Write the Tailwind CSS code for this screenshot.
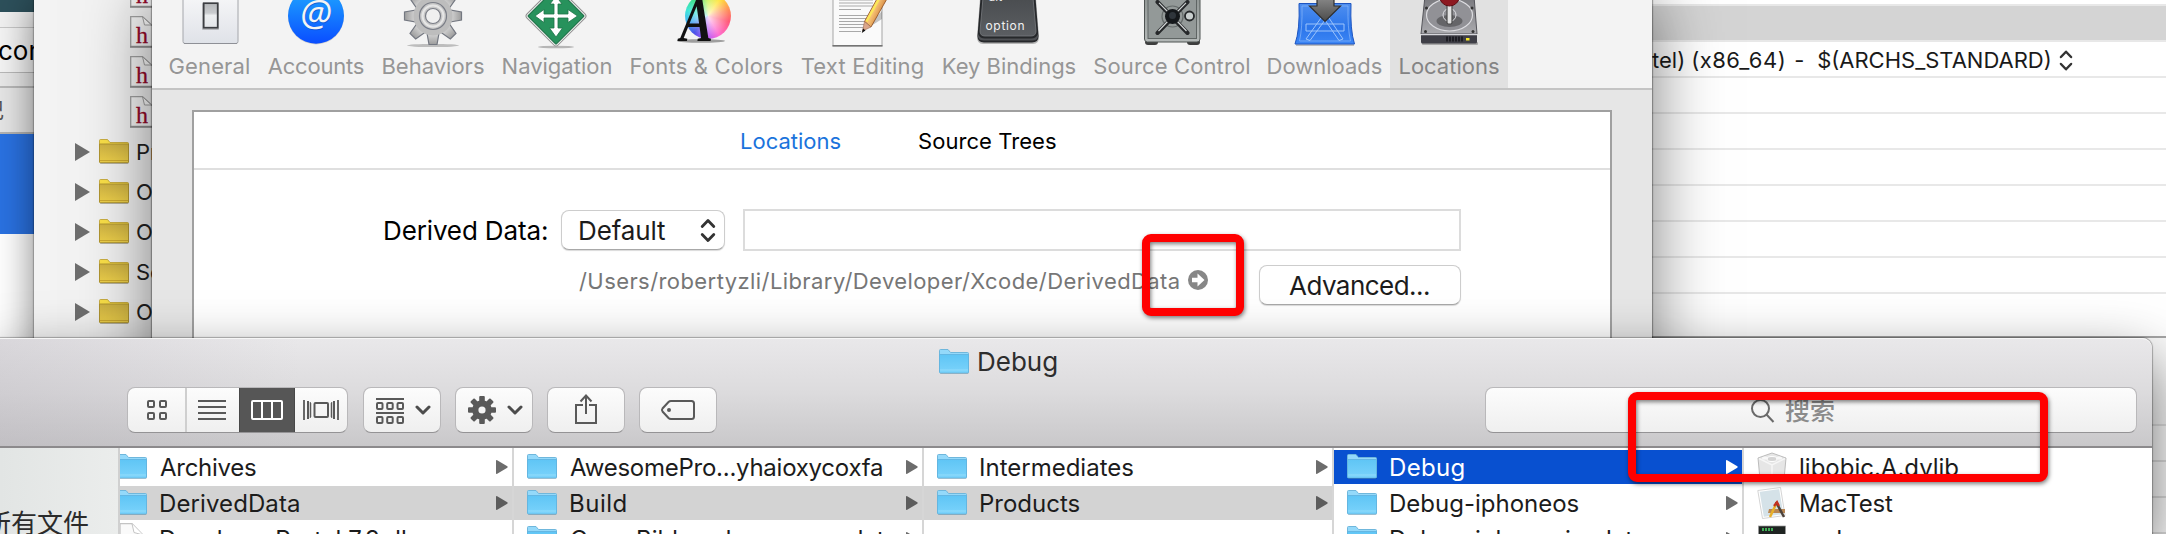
<!DOCTYPE html>
<html lang="zh" class="overflow-hidden">
<head>
<meta charset="utf-8">
<title>Debug</title>
<script src="https://cdn.jsdelivr.net/npm/@tailwindcss/browser@4"></script>
</head>
<body class="relative h-[534px] w-[2166px] overflow-hidden bg-white font-[Inter,'Noto_Sans_CJK_SC',sans-serif] text-black">

<svg class="absolute size-0" aria-hidden="true">
  <defs>
    <linearGradient id="gBlue" x1="0" y1="0" x2="0" y2="1"><stop offset="0" stop-color="#5fc5f5"/><stop offset="1" stop-color="#7bd3fb"/></linearGradient>
    <linearGradient id="gYel" x1="0" y1="0" x2="0" y2="1"><stop offset="0" stop-color="#cfb345"/><stop offset="1" stop-color="#f0d24a"/></linearGradient>
    <symbol id="folder" viewBox="0 0 30 26">
      <rect x="1" y="5" width="28.500" height="20" rx="1" fill="#000" opacity=".22"/>
      <path d="M.5 23V1.500Q.5.500 1.500.5H9l2.500 3H28.500Q29.500 3.500 29.500 4.500V23Z" fill="#94d9fa" stroke="#6fb7dc"/>
      <path d="M.5 5.500H29.500V23Q29.500 24 28.500 24H1.500Q.5 24 .5 23Z" fill="url(#gBlue)" stroke="#62b4e0" stroke-width=".9"/>
      <path d="M1 21H29" stroke="#9adffb" stroke-width=".8"/>
    </symbol>
    <symbol id="yfolder" viewBox="0 0 30 26">
      <rect x="1" y="5" width="28.500" height="20" rx="1" fill="#000" opacity=".25"/>
      <path d="M.5 23V1.500Q.5.500 1.500.5H8.500L11 3.500H28.500Q29.500 3.500 29.500 4.500V23Z" fill="#fbe148" stroke="#bfa02c" stroke-width=".8"/>
      <path d="M.5 5H29.500V23Q29.500 23.700 28.500 23.700H1.500Q.5 23.700 .5 23Z" fill="url(#gYel)" stroke="#ad922e" stroke-width=".9"/>
      <path d="M1 21.500H29" stroke="#c9a52f" stroke-width=".9"/>
    </symbol>
    <symbol id="tri" viewBox="0 0 12 14"><path d="M0 1Q0-.3 1.200.3L11.300 6.300Q12 7 11.300 7.700L1.200 13.700Q0 14.300 0 13Z" fill="currentColor"/></symbol>
    <symbol id="hfile" viewBox="0 0 30 32">
      <path d="M.7 30.500V.7H12.500L21.500 9H30V30.500Z" fill="#f7f7f7" stroke="#a3a3a3" stroke-width="1.300"/>
      <path d="M12.500.7L14.500 9H21.500Z" fill="#fff" stroke="#a3a3a3"/>
      <path d="M0 31H30" stroke="#8a8a8a" stroke-width="1.400"/>
      <text x="6" y="26.500" font-family="Liberation Serif" font-size="24" fill="#97092a" stroke="#97092a" stroke-width=".3">h</text>
    </symbol>
    <symbol id="updown" viewBox="0 0 16 24"><path d="M2.200 8L8 2l5.800 6M2.200 16L8 22l5.800-6" fill="none" stroke="currentColor" stroke-width="2.800" stroke-linecap="round" stroke-linejoin="round"/></symbol>
    <symbol id="chev" viewBox="0 0 16 10"><path d="M2 2l6 6 6-6" fill="none" stroke="#4c4c4c" stroke-width="3" stroke-linecap="round" stroke-linejoin="round"/></symbol>
  </defs>
</svg>

<!-- Rear window on the left -->
<section class="absolute left-0 top-0 flex h-[534px] w-[34px] flex-col overflow-hidden bg-white">
  <div class="h-[12px] bg-[#2d505b]"></div>
  <div class="h-[16px] border-b border-[#c8c8c8] bg-[#f2f2f2]"></div>
  <div class="flex h-[45px] items-center border-b border-[#b9b9b9] bg-[#f4f4f4] pt-px text-[26px] leading-none"><span class="-ml-[2px]">con</span></div>
  <div class="h-[15px] border-b-2 border-[#b9b9b9] bg-[#e9e9e9]"></div>
  <div class="flex h-[46px] items-center border-b-2 border-[#b3b3b3] bg-[#e6e6e6] text-[22px] leading-none text-[#555]"><span class="-ml-[18px]">记</span></div>
  <div class="h-[100px] bg-[#2a72e2]"></div>
</section>

<!-- Xcode project window -->
<section class="absolute left-[34px] top-0 flex h-[534px] w-[2132px] bg-white shadow-[0_0_36px_rgba(0,0,0,.5),0_0_1px_1px_rgba(0,0,0,.22)]">
  <nav class="flex w-[158px] flex-col bg-[#f3f3f3] text-[22px] leading-none text-[#222]">
    <div class="-mt-[28px] flex h-[40px] items-center pl-[96px]"><svg class="h-[32px] w-[30px]"><use href="#hfile"/></svg></div>
    <div class="flex h-[40px] items-center pl-[96px]"><svg class="h-[32px] w-[30px]"><use href="#hfile"/></svg></div>
    <div class="flex h-[40px] items-center pl-[96px]"><svg class="h-[32px] w-[30px]"><use href="#hfile"/></svg></div>
    <div class="flex h-[40px] items-center pl-[96px]"><svg class="h-[32px] w-[30px]"><use href="#hfile"/></svg></div>
    <div class="flex h-[40px] items-center whitespace-nowrap pl-[41px]"><svg class="mr-[9px] h-[18px] w-[15px] text-[#6e6e6e]" viewBox="0 0 15 18"><path d="M0 0L15 9L0 18Z" fill="currentColor"/></svg><svg class="mr-[7px] h-[26px] w-[30px]"><use href="#yfolder"/></svg>Pr</div>
    <div class="flex h-[40px] items-center whitespace-nowrap pl-[41px]"><svg class="mr-[9px] h-[18px] w-[15px] text-[#6e6e6e]" viewBox="0 0 15 18"><path d="M0 0L15 9L0 18Z" fill="currentColor"/></svg><svg class="mr-[7px] h-[26px] w-[30px]"><use href="#yfolder"/></svg>O</div>
    <div class="flex h-[40px] items-center whitespace-nowrap pl-[41px]"><svg class="mr-[9px] h-[18px] w-[15px] text-[#6e6e6e]" viewBox="0 0 15 18"><path d="M0 0L15 9L0 18Z" fill="currentColor"/></svg><svg class="mr-[7px] h-[26px] w-[30px]"><use href="#yfolder"/></svg>O</div>
    <div class="flex h-[40px] items-center whitespace-nowrap pl-[41px]"><svg class="mr-[9px] h-[18px] w-[15px] text-[#6e6e6e]" viewBox="0 0 15 18"><path d="M0 0L15 9L0 18Z" fill="currentColor"/></svg><svg class="mr-[7px] h-[26px] w-[30px]"><use href="#yfolder"/></svg>Se</div>
    <div class="flex h-[40px] items-center whitespace-nowrap pl-[41px]"><svg class="mr-[9px] h-[18px] w-[15px] text-[#6e6e6e]" viewBox="0 0 15 18"><path d="M0 0L15 9L0 18Z" fill="currentColor"/></svg><svg class="mr-[7px] h-[26px] w-[30px]"><use href="#yfolder"/></svg>O</div>
  </nav>
  <div class="ml-auto flex w-[514px] flex-col">
    <div class="h-[6px] border-b-2 border-[#e8e8e8]"></div>
    <div class="h-[36px] border-b-2 border-[#e8e8e8] bg-[#d4d4d4]"></div>
    <div class="flex h-[36px] items-center border-b-2 border-[#e8e8e8] pt-[2px] text-[22px] leading-none text-[#1a1a1a]">
      <span>tel)</span><span class="ml-[6px] tracking-[.47px]">(x86_64)</span><span class="ml-[8px] w-[23px]">-</span><span>$(ARCHS_STANDARD)</span>
      <svg class="ml-[7px] h-[21px] w-[14px] text-[#333]"><use href="#updown"/></svg>
    </div>
    <div class="h-[36px] border-b-2 border-[#e8e8e8]"></div>
    <div class="h-[36px] border-b-2 border-[#e8e8e8]"></div>
    <div class="h-[36px] border-b-2 border-[#e8e8e8]"></div>
    <div class="h-[36px] border-b-2 border-[#e8e8e8]"></div>
    <div class="h-[36px] border-b-2 border-[#e8e8e8]"></div>
    <div class="h-[36px] border-b-2 border-[#e8e8e8]"></div>
    <div class="h-[44px] border-b-2 border-[#a6a6a6]"></div>
    <div class="h-[88px] border-b-2 border-[#e4e4e4] bg-[#fbfbfb]"></div>
    <div class="h-[36px] border-b-2 border-[#e0e0e0]"></div>
    <div class="h-[36px] border-b-2 border-[#e0e0e0]"></div>
    <div class="h-[36px] border-b-2 border-[#e0e0e0]"></div>
  </div>
</section>

<!-- Xcode preferences window -->
<section class="absolute left-[152px] top-0 flex h-[534px] w-[1500px] flex-col bg-[#e6e6e6] shadow-[0_0_64px_rgba(0,0,0,.52),0_0_1px_1px_rgba(0,0,0,.3)]">
  <div class="flex h-[90px] border-b-2 border-[#c4c4c4] bg-[#f3f3f3] pl-[8px] text-[22px] leading-none text-[#969696]">
    <div class="flex w-[99px] flex-col items-center whitespace-nowrap">
      <svg class="h-[50px] w-[64px]" viewBox="0 0 64 50">
        <defs><linearGradient id="g1" x1="0" y1="0" x2="0" y2="1"><stop offset="0" stop-color="#f8f8f9"/><stop offset="1" stop-color="#dfe2e8"/></linearGradient><linearGradient id="g1b" x1="0" y1="0" x2="0" y2="1"><stop offset="0" stop-color="#b5b7ba"/><stop offset=".4" stop-color="#c9cbce"/><stop offset=".5" stop-color="#eceef0"/><stop offset="1" stop-color="#e3e5e8"/></linearGradient></defs>
        <rect x="5" y="-8" width="55" height="51.500" rx="2" fill="url(#g1)" stroke="#a4a6ab"/>
        <path d="M6 43.500H59" stroke="#8e9096"/>
        <rect x="24" y="3" width="17" height="27" rx="1" fill="#000" opacity=".2"/>
        <rect x="25.700" y="3.200" width="14" height="24.500" fill="url(#g1b)" stroke="#3c3e42" stroke-width="1.700"/>
      </svg>
      <span class="mt-[5px] tracking-[.13px]">General</span>
    </div>
    <div class="flex w-[114px] flex-col items-center whitespace-nowrap">
      <svg class="h-[50px] w-[64px]" viewBox="0 0 64 50">
        <defs><linearGradient id="g2" x1="0" y1="0" x2="0" y2="1"><stop offset="0" stop-color="#1fa9ff"/><stop offset="1" stop-color="#0a4dff"/></linearGradient></defs>
        <circle cx="32" cy="16.500" r="28" fill="#000" opacity=".15"/>
        <circle cx="32" cy="15.700" r="28" fill="url(#g2)"/>
        <text x="32.500" y="26.500" text-anchor="middle" font-family="Open Sans" font-style="italic" font-size="37" fill="#0a3fae" opacity=".5">@</text>
        <text x="32" y="25.500" text-anchor="middle" font-family="Open Sans" font-style="italic" font-size="37" fill="#f4f4f4">@</text>
      </svg>
      <span class="mt-[5px] tracking-[-.2px]">Accounts</span>
    </div>
    <div class="flex w-[120px] flex-col items-center whitespace-nowrap">
      <svg class="h-[50px] w-[64px]" viewBox="0 0 64 50">
        <defs><linearGradient id="g3" x1="0" y1="0" x2="0" y2="1"><stop offset="0" stop-color="#d8d8d8"/><stop offset="1" stop-color="#9d9d9d"/></linearGradient></defs>
        <ellipse cx="32" cy="45.500" rx="26" ry="1.600" fill="#000" opacity=".22"/>
        <g fill="url(#g3)" stroke="#737780" stroke-width="1.200" transform="translate(0,1)">
          <path d="M26 32L28 43.500H36L38 32Z"/>
          <path d="M26 32L28 43.500H36L38 32Z" transform="rotate(45 32 15)"/>
          <path d="M26 32L28 43.500H36L38 32Z" transform="rotate(90 32 15)"/>
          <path d="M26 32L28 43.500H36L38 32Z" transform="rotate(135 32 15)"/>
          <path d="M26 32L28 43.500H36L38 32Z" transform="rotate(-45 32 15)"/>
          <path d="M26 32L28 43.500H36L38 32Z" transform="rotate(-90 32 15)"/>
          <path d="M26 32L28 43.500H36L38 32Z" transform="rotate(-135 32 15)"/>
        </g>
        <circle cx="32" cy="16" r="19.500" fill="#bdbdbd"/>
        <circle cx="32" cy="16" r="13.500" fill="#c6c6c6" stroke="#7a7d86" stroke-width="1.200"/>
        <circle cx="32" cy="16" r="10.500" fill="none" stroke="#e6e6e6" stroke-width="2"/>
        <circle cx="32" cy="16" r="7.500" fill="#f0f0f0" stroke="#7a7d86" stroke-width="1.200"/>
      </svg>
      <span class="mt-[5px]">Behaviors</span>
    </div>
    <div class="flex w-[128px] flex-col items-center whitespace-nowrap">
      <svg class="h-[50px] w-[66px]" viewBox="0 0 66 50">
        <ellipse cx="32" cy="47" rx="18" ry="1.300" fill="#000" opacity=".25"/>
        <rect x="-22" y="-22" width="44" height="44" rx="3" transform="translate(32 16) rotate(45)" fill="#f1f1f1" stroke="#8e8e8e"/>
        <rect x="-20" y="-20" width="40" height="40" rx="1" transform="translate(32 16) rotate(45)" fill="#27925c" stroke="#1c6e45"/>
        <path d="M32-4l-6 8h4v10H20V9.500L11 16l9 6.500V18H30V28H25.500L32 37l6.500-9H34V18H44v4.500L53.500 16 44 9.500V14H34V4h4Z" fill="#fff" stroke="#1d7348" stroke-width=".8"/>
      </svg>
      <span class="mt-[5px]">Navigation</span>
    </div>
    <div class="flex w-[171px] flex-col items-center whitespace-nowrap">
      <div class="relative h-[50px] w-[64px]">
        <div class="absolute -top-[7px] left-[10px] size-[46px] rounded-full bg-[conic-gradient(#c8f04a,#ffe53a_35deg,#ff8a5c_75deg,#ff5a78_105deg,#ff6fd0_150deg,#b45cff_185deg,#4b52e8_220deg,#45b4f5_255deg,#3fe5d8_285deg,#3fe07a_325deg,#c8f04a)]"></div>
        <div class="absolute -top-[7px] left-[10px] size-[46px] rounded-full bg-[radial-gradient(#ffffffcc,#ffffff00_65%)]"></div>
        <svg class="absolute left-0 top-0 h-[50px] w-[64px]" viewBox="0 0 64 50">
          <ellipse cx="26" cy="41" rx="24" ry="1.800" fill="#000" opacity=".35"/>
          <text x="5" y="40.500" font-family="Liberation Serif" font-style="italic" font-weight="700" font-size="64" textLength="33" lengthAdjust="spacingAndGlyphs" fill="#111">A</text>
        </svg>
      </div>
      <span class="mt-[5px] tracking-[.19px]">Fonts &amp; Colors</span>
    </div>
    <div class="flex w-[141px] flex-col items-center whitespace-nowrap">
      <svg class="h-[50px] w-[64px]" viewBox="0 0 64 50">
        <defs><linearGradient id="g6" x1="0" y1="0" x2="1" y2="0.600"><stop offset="0" stop-color="#e88a2a"/><stop offset=".5" stop-color="#f7c173"/><stop offset="1" stop-color="#b4561b"/></linearGradient></defs>
        <rect x="2" y="-5" width="49" height="51" fill="#fafafa" stroke="#a5a5a5"/>
        <path d="M1.500 45.800H51.500" stroke="#747474" stroke-width="1.400"/>
        <path d="M8 0H42M8 3H42M8 6H42M8 9.500H30M8 15.500H42M8 18.500H38M8 21.500H38M8 24.500H34M8 27.500H34M8 31.500H30" stroke="#a9a9a9" stroke-width="1.200"/>
        <path d="M32 31L51 19V11Z" fill="#000" opacity=".22"/>
        <path d="M33.500 21.500L47-3H57L40 27Z" fill="url(#g6)" stroke="#8a4a1c" stroke-width=".8"/>
        <path d="M35.500 21.500L49-3" stroke="#fbe75a" stroke-width="2.400"/>
        <path d="M33.500 21.500L31.500 31 40 27Z" fill="#dba68a" stroke="#9a6a50" stroke-width=".6"/>
        <path d="M32 28.500L30.800 33 34.500 30.500Z" fill="#111"/>
      </svg>
      <span class="mt-[5px] tracking-[.17px]">Text Editing</span>
    </div>
    <div class="flex w-[152px] flex-col items-center whitespace-nowrap">
      <svg class="h-[50px] w-[64px]" viewBox="0 0 64 50">
        <defs><linearGradient id="g7" x1="0" y1="0" x2="0" y2="1"><stop offset="0" stop-color="#4a4d50"/><stop offset="1" stop-color="#5b5e62"/></linearGradient></defs>
        <path d="M3-2H59L62 37Q62 44 56 44H6Q0 44 0 37Z" fill="#000" opacity=".25"/>
        <path d="M3.500-2H58.500L61.500 36Q61.500 42.500 55 42.500H7Q.5 42.500.5 36Z" fill="#26282b"/>
        <path d="M1 34Q3 38.500 8 38.500H54Q59 38.500 61 34V37Q60 40.500 55 40.500H7Q2 40.500 1 37Z" fill="#4f5155"/>
        <path d="M6-2H56L59 31Q59 36 54 36H8Q3 36 3 31Z" fill="url(#g7)" stroke="#777a7e" stroke-width=".8"/>
        <text x="11.500" y="1" font-family="Inter" font-size="12" fill="#e8e8e8">alt</text>
        <text x="8.500" y="30" font-family="Inter" font-size="12" textLength="39" fill="#f1f1f1">option</text>
      </svg>
      <span class="mt-[5px]">Key Bindings</span>
    </div>
    <div class="flex w-[174px] flex-col items-center whitespace-nowrap">
      <svg class="h-[50px] w-[64px]" viewBox="0 0 64 50">
        <defs><linearGradient id="g8" x1="0" y1="0" x2="0" y2="1"><stop offset="0" stop-color="#8d9391"/><stop offset="1" stop-color="#b3b8b7"/></linearGradient></defs>
        <rect x="5" y="39" width="13" height="6" rx="3" fill="#3d3d3d"/><rect x="47" y="39" width="13" height="6" rx="3" fill="#3d3d3d"/>
        <rect x="4.500" y="-8" width="55.500" height="50" rx="3" fill="url(#g8)" stroke="#4f5453"/>
        <rect x="8" y="-8" width="48.500" height="46.500" fill="#939998" stroke="#5f6564"/>
        <circle cx="32.500" cy="16.500" r="10.500" fill="none" stroke="#666c6b" stroke-width="1.200"/>
        <path d="M17.500 2L47.500 33M47.500 2L17.500 33" stroke="#26282a" stroke-width="4" stroke-linecap="round"/>
        <path d="M19 2.800L29 13M46 2.800L36 13M18.500 31L28 21M37 21L46.500 31" stroke="#d0d4d4" stroke-width="1.200"/>
        <circle cx="32.500" cy="16.500" r="7.500" fill="#15181b"/><circle cx="32.500" cy="15.500" r="3.500" fill="#2f353b"/>
        <circle cx="49.500" cy="16" r="4.500" fill="#c9cfce" stroke="#26292b" stroke-width="1.800"/>
      </svg>
      <span class="mt-[5px] tracking-[.12px]">Source Control</span>
    </div>
    <div class="flex w-[131px] flex-col items-center whitespace-nowrap">
      <svg class="h-[50px] w-[64px]" viewBox="0 0 64 50">
        <defs><linearGradient id="g9" x1="0" y1="0" x2="0" y2="1"><stop offset="0" stop-color="#4f8ff0"/><stop offset=".6" stop-color="#2b75ea"/><stop offset="1" stop-color="#3c86f5"/></linearGradient><linearGradient id="g9b" x1="0" y1="0" x2="0" y2="1"><stop offset="0" stop-color="#8a8a8a"/><stop offset="1" stop-color="#4a4a4a"/></linearGradient></defs>
        <path d="M3 45H61" stroke="#000" stroke-opacity=".3" stroke-width="1.500"/>
        <path d="M6 3.500H58Q57 30 61.500 44H2Q7 30 6 3.500Z" fill="url(#g9)" stroke="#1e55c0"/>
        <path d="M9 6H55Q54.500 28 57.500 41H6.500Q9.500 28 9 6Z" fill="none" stroke="#7fb0f8" stroke-width=".8"/>
        <path d="M28 18L13 39l4 1.500L32 20 46 40.500l4-1.500L36 18M13 24H51V31H13Z" fill="none" stroke="#9cc4fb" stroke-width="1"/>
        <path d="M24-3H41V6H47.500L32 21.500 16.500 6H24Z" fill="url(#g9b)" stroke="#2f2f2f" stroke-width="1.200"/>
      </svg>
      <span class="mt-[5px]">Downloads</span>
    </div>
    <div class="flex w-[118px] flex-col items-center whitespace-nowrap bg-[#e1e1e1] text-[#848484]">
      <svg class="h-[50px] w-[64px]" viewBox="0 0 64 50">
        <defs><linearGradient id="g10" x1="0" y1="0" x2="0" y2="1"><stop offset="0" stop-color="#77777c"/><stop offset="1" stop-color="#aaaaae"/></linearGradient></defs>
        <rect x="5" y="42" width="56" height="3" rx="1" fill="#000" opacity=".25"/>
        <path d="M8-4H57L60 34H4Z" fill="url(#g10)" stroke="#55555b"/>
        <ellipse cx="32.500" cy="15" rx="23" ry="16" fill="#919196" stroke="#dcdce0" stroke-width="1.200"/>
        <ellipse cx="32.500" cy="21" rx="13" ry="6" fill="#000" opacity=".3"/>
        <circle cx="32.500" cy="15" r="6.500" fill="none" stroke="#e0e0e4"/>
        <circle cx="8.500" cy="31.500" r="1.500" fill="#333"/><circle cx="56" cy="31.500" r="1.500" fill="#333"/><circle cx="9.500" cy="8" r="1.500" fill="#333"/><circle cx="55" cy="8" r="1.500" fill="#333"/>
        <path d="M4 35H60V42Q60 43.500 58.500 43.500H5.500Q4 43.500 4 42Z" fill="#3f3f47"/>
        <path d="M4 34.600H60" stroke="#d7d7dc" stroke-width="1.200"/>
        <path d="M30 36.500V41.500M33 36.500V41.500M36 36.500V41.500M39 36.500V41.500M42 36.500V41.500M45 36.500V41.500" stroke="#15151a" stroke-width="1.500"/>
        <rect x="49" y="38" width="3.500" height="2.500" fill="#f4e52a"/>
        <rect x="30" y="3" width="5" height="21" rx="1.500" fill="#e3e3e3" stroke="#4b4b4b" stroke-width="1.200"/>
        <circle cx="32.500" cy="-4" r="10" fill="#8d1820" stroke="#5d0d13"/>
      </svg>
      <span class="mt-[5px]">Locations</span>
    </div>
  </div>
  <div class="ml-[40px] mt-[20px] flex h-[424px] w-[1420px] flex-col border-2 border-b-0 border-[#a0a0a0] bg-white">
    <div class="flex h-[58px] items-center border-b-2 border-[#dfdfdf] pl-[546px] pt-px text-[22px] leading-none"><span class="w-[178px] text-[#1a73dc]">Locations</span><span class="tracking-[.06px]">Source Trees</span></div>
    <div class="mt-[39px] flex h-[42px] items-center pl-[189px] text-[26px] leading-none">
      <span class="w-[178px] whitespace-nowrap pt-[2px] tracking-[-.13px]">Derived Data:</span>
      <div class="flex h-[40px] w-[164px] items-center justify-between rounded-[8px] border border-[#cdcdcd] border-b-[#a8a8a8] bg-white pl-[16px] pr-[8px] text-[#1c1c1c] shadow-[0_1px_1px_rgba(0,0,0,.15)]"><span class="pt-[2px] tracking-[-.13px]">Default</span><svg class="h-[25px] w-[16px] text-[#333]"><use href="#updown"/></svg></div>
      <div class="ml-[18px] h-[42px] w-[718px] border-2 border-[#dcdcdc]"></div>
    </div>
    <div class="flex pl-[385px] pt-[14px]">
      <span class="h-[32px] w-[609px] whitespace-nowrap text-[22px] leading-[32px] tracking-[.42px] text-[#767676]">/Users/robertyzli/Library/Developer/Xcode/DerivedData</span>
      <svg class="mt-[5px] size-[20px]" viewBox="0 0 20 20"><circle cx="10" cy="10" r="10" fill="#878787"/><path d="M4 7.700H9.500V3.500L16.500 10 9.500 16.500V12.300H4Z" fill="#fff"/></svg>
      <div class="ml-[51px] flex h-[40px] w-[202px] items-center justify-center rounded-[8px] border border-[#cdcdcd] border-b-[#a8a8a8] bg-white pr-px pt-px text-[26px] leading-none tracking-[-.53px] text-[#1c1c1c] shadow-[0_1px_1px_rgba(0,0,0,.15)]">Advanced...</div>
    </div>
  </div>
</section>

<!-- Finder window -->
<section class="absolute left-0 top-[338px] flex h-[196px] w-[2152px] flex-col rounded-tr-[10px] bg-white shadow-[0_24px_60px_rgba(0,0,0,.6),0_0_1px_1px_rgba(0,0,0,.28)]">
  <header class="flex h-[110px] shrink-0 flex-col rounded-tr-[10px] border-b-2 border-[#8c8a8c] border-t border-t-[#f6f6f6] bg-[linear-gradient(90deg,rgba(170,165,175,.25),transparent_300px),linear-gradient(#e9e8ea,#dcdbdd_50%,#c9c8ca)]">
    <div class="flex h-[45px] items-center pl-[939px] text-[26px] leading-none text-[#2d2d2d]"><svg class="mr-[8px] h-[26px] w-[30px]"><use href="#folder"/></svg><span>Debug</span></div>
    <div class="mt-[3px] flex h-[46px] pl-[127px]">
      <div class="flex h-[46px] w-[221px] overflow-hidden rounded-[8px] border border-[#b9b8ba] border-b-[#949395] bg-linear-to-b from-[#fcfcfc] to-[#efefef]">
        <div class="flex w-[59px] items-center justify-center border-r-2 border-[#cfcfcf]"><svg class="size-[20px]" viewBox="0 0 20 20" fill="none" stroke="#595959" stroke-width="2"><rect x="1" y="1" width="6" height="6" rx="1"/><rect x="13" y="1" width="6" height="6" rx="1"/><rect x="1" y="13" width="6" height="6" rx="1"/><rect x="13" y="13" width="6" height="6" rx="1"/></svg></div>
        <div class="flex w-[52px] items-center justify-center pr-[2px]"><svg class="h-[20px] w-[28px]" viewBox="0 0 28 20"><path d="M0 1H28M0 7H28M0 13H28M0 19H28" stroke="#595959" stroke-width="2"/></svg></div>
        <div class="flex w-[56px] items-center justify-center border-x border-[#484848] bg-[#565656] pr-px"><svg class="h-[20px] w-[32px]" viewBox="0 0 32 20" fill="none" stroke="#fff" stroke-width="2"><rect x="1" y="1" width="30" height="18" rx="1"/><path d="M11 1V19M21 1V19"/></svg></div>
        <div class="flex flex-1 items-center justify-center"><svg class="h-[20px] w-[36px]" viewBox="0 0 36 20" fill="none" stroke="#595959"><path d="M1 0V20M35 0V20" stroke-width="1.800"/><path d="M5 1V19M31 1V19" stroke-width="2"/><path d="M7 2L8 3V17L7 18ZM29 2L28 3V17L29 18Z" stroke-width=".5" fill="#595959"/><rect x="11.500" y="3" width="13.500" height="14" rx="1" stroke-width="2"/></svg></div>
      </div>
      <div class="ml-[15px] flex h-[46px] w-[78px] items-center rounded-[8px] border border-[#b9b8ba] border-b-[#949395] bg-linear-to-b from-[#fcfcfc] to-[#efefef] pl-[12px]">
        <svg class="mt-[2px] h-[26px] w-[28px]" viewBox="0 0 28 26" fill="none" stroke="#595959" stroke-width="2"><path d="M0 1H28M0 15H28"/><rect x="1" y="5" width="5.500" height="6" rx="1"/><rect x="11.200" y="5" width="5.500" height="6" rx="1"/><rect x="21.500" y="5" width="5.500" height="6" rx="1"/><rect x="1" y="19" width="5.500" height="6" rx="1"/><rect x="11.200" y="19" width="5.500" height="6" rx="1"/><rect x="21.500" y="19" width="5.500" height="6" rx="1"/></svg>
        <svg class="ml-[11px] h-[10px] w-[16px]"><use href="#chev"/></svg>
      </div>
      <div class="ml-[14px] flex h-[46px] w-[78px] items-center rounded-[8px] border border-[#b9b8ba] border-b-[#949395] bg-linear-to-b from-[#fcfcfc] to-[#efefef] pl-[12px]">
        <svg class="size-[28px]" viewBox="-14 -14 28 28"><g fill="#595959"><rect x="-2.800" y="-14" width="5.600" height="28" rx="1"/><rect x="-2.800" y="-14" width="5.600" height="28" rx="1" transform="rotate(45)"/><rect x="-2.800" y="-14" width="5.600" height="28" rx="1" transform="rotate(90)"/><rect x="-2.800" y="-14" width="5.600" height="28" rx="1" transform="rotate(135)"/><circle r="9.800"/></g><circle r="3.600" fill="#f4f4f4"/></svg>
        <svg class="ml-[11px] h-[10px] w-[16px]"><use href="#chev"/></svg>
      </div>
      <div class="ml-[14px] flex h-[46px] w-[78px] items-center justify-center rounded-[8px] border border-[#b9b8ba] border-b-[#949395] bg-linear-to-b from-[#fcfcfc] to-[#efefef]">
        <svg class="-mt-[2px] h-[30px] w-[22px]" viewBox="0 0 22 30" fill="none" stroke="#595959" stroke-width="2"><path d="M8 11H1V29H21V11H14M11 20V2M5.500 7.500L11 1.500 16.500 7.500"/></svg>
      </div>
      <div class="ml-[14px] flex h-[46px] w-[78px] items-center justify-center rounded-[8px] border border-[#b9b8ba] border-b-[#949395] bg-linear-to-b from-[#fcfcfc] to-[#efefef]">
        <svg class="h-[22px] w-[36px]" viewBox="0 0 36 22" fill="none" stroke="#595959" stroke-width="2"><path d="M11 2H31.500Q34 2 34 4.500V17.500Q34 20 31.500 20H11Q9.500 20 8.500 19L2.500 12.500Q1.300 11 2.500 9.500L8.500 3Q9.500 2 11 2Z"/><circle cx="9" cy="11" r="2" fill="#595959" stroke="none"/></svg>
      </div>
      <div class="ml-auto mr-[15px] flex h-[46px] w-[652px] items-center rounded-[8px] border border-[#b9b8ba] border-b-[#949395] bg-linear-to-b from-[#fcfcfc] to-[#efefef] pl-[265px] text-[25px] leading-none text-[#8b8b8b]">
        <svg class="mr-[10px] mt-[2px] h-[24px] w-[24px]" viewBox="0 0 24 24" fill="none" stroke="#6a6a6a" stroke-width="2"><circle cx="9.500" cy="9.500" r="8.500"/><path d="M15.500 15.500L22.500 23"/></svg><span class="pt-[2px] font-medium">搜索</span>
      </div>
    </div>
  </header>

  <div class="flex h-[86px] overflow-hidden text-[24px] leading-none text-[#1c1c1c]">
    <div class="w-[120px] overflow-hidden whitespace-nowrap border-r-2 border-[#d0d0d0] bg-linear-to-r from-[#e2e5e4] to-[#ebedec] text-[#2b2b2b]"><div class="-ml-[15px] mt-[63px] text-[26px]">所有文件</div></div>

    <div class="flex w-[394px] flex-col gap-[2px] border-r-2 border-[#d6d6d6] pt-[2px]">
      <div class="flex h-[34px] shrink-0 items-center overflow-hidden pr-[4px]"><svg class="-ml-[3px] mr-[13px] h-[26px] w-[30px] shrink-0"><use href="#folder"/></svg><span class="pt-px tracking-[-.27px]">Archives</span><svg class="ml-auto h-[14px] w-[12px] text-[#6c6c6c]"><use href="#tri"/></svg></div>
      <div class="flex h-[34px] shrink-0 items-center overflow-hidden bg-[#d3d3d3] pr-[4px]"><svg class="-ml-[3px] mr-[12px] h-[26px] w-[30px] shrink-0"><use href="#folder"/></svg><span class="pt-px tracking-[.1px]">DerivedData</span><svg class="ml-auto h-[14px] w-[12px] text-[#5c5c5c]"><use href="#tri"/></svg></div>
      <div class="flex h-[34px] shrink-0 items-center whitespace-nowrap"><svg class="mr-[14px] h-[32px] w-[24px] shrink-0" viewBox="0 0 24 32"><path d="M0 31V.7H12L23 12V31" fill="#fafafa" stroke="#c4c4c4" stroke-width="1.300"/><path d="M12 .7L14 9.500 23 12" fill="#fff" stroke="#c4c4c4"/></svg><span class="pl-px pt-px">DeveloperPortal 7.3.db</span></div>
    </div>

    <div class="flex w-[410px] flex-col gap-[2px] border-r-2 border-[#d6d6d6] pt-[2px]">
      <div class="flex h-[34px] shrink-0 items-center whitespace-nowrap pl-[13px] pr-[4px]"><svg class="mr-[13px] h-[26px] w-[30px] shrink-0"><use href="#folder"/></svg><span class="pt-px tracking-[-.25px]">AwesomePro...yhaioxycoxfa</span><svg class="ml-auto h-[14px] w-[12px] text-[#6c6c6c]"><use href="#tri"/></svg></div>
      <div class="flex h-[34px] shrink-0 items-center bg-[#d3d3d3] pl-[13px] pr-[4px]"><svg class="mr-[12px] h-[26px] w-[30px] shrink-0"><use href="#folder"/></svg><span class="pt-px tracking-[.5px]">Build</span><svg class="ml-auto h-[14px] w-[12px] text-[#5c5c5c]"><use href="#tri"/></svg></div>
      <div class="flex h-[34px] shrink-0 items-center whitespace-nowrap pl-[13px] pr-[4px]"><svg class="mr-[12px] h-[26px] w-[30px] shrink-0"><use href="#folder"/></svg><span class="pl-px pt-px">CameBildw...dxncmngcsdat</span><svg class="ml-auto h-[14px] w-[12px] shrink-0 text-[#6c6c6c]"><use href="#tri"/></svg></div>
    </div>

    <div class="flex w-[410px] flex-col gap-[2px] border-r-2 border-[#d6d6d6] pt-[2px]">
      <div class="flex h-[34px] shrink-0 items-center pl-[13px] pr-[4px]"><svg class="mr-[12px] h-[26px] w-[30px] shrink-0"><use href="#folder"/></svg><span class="pt-px">Intermediates</span><svg class="ml-auto h-[14px] w-[12px] text-[#6c6c6c]"><use href="#tri"/></svg></div>
      <div class="flex h-[34px] shrink-0 items-center bg-[#d3d3d3] pl-[13px] pr-[4px]"><svg class="mr-[12px] h-[26px] w-[30px] shrink-0"><use href="#folder"/></svg><span class="pt-px">Products</span><svg class="ml-auto h-[14px] w-[12px] text-[#5c5c5c]"><use href="#tri"/></svg></div>
    </div>

    <div class="flex w-[410px] flex-col gap-[2px] border-r-2 border-[#d6d6d6] pt-[2px]">
      <div class="flex h-[34px] shrink-0 items-center bg-[#0850d0] pl-[13px] pr-[4px] text-white"><svg class="mr-[12px] h-[26px] w-[30px] shrink-0"><use href="#folder"/></svg><span class="pt-px tracking-[.33px]">Debug</span><svg class="ml-auto h-[14px] w-[12px]"><use href="#tri"/></svg></div>
      <div class="flex h-[34px] shrink-0 items-center pl-[13px] pr-[4px]"><svg class="mr-[12px] h-[26px] w-[30px] shrink-0"><use href="#folder"/></svg><span class="pt-px">Debug-iphoneos</span><svg class="ml-auto h-[14px] w-[12px] text-[#6c6c6c]"><use href="#tri"/></svg></div>
      <div class="flex h-[34px] shrink-0 items-center pl-[13px] pr-[4px]"><svg class="mr-[12px] h-[26px] w-[30px] shrink-0"><use href="#folder"/></svg><span class="pt-px">Debug-iphonesimulator</span><svg class="ml-auto h-[14px] w-[12px] text-[#6c6c6c]"><use href="#tri"/></svg></div>
    </div>

    <div class="flex flex-1 flex-col gap-[2px] pt-[2px]">
      <div class="flex h-[34px] shrink-0 items-center pl-[13px]"><svg class="mr-[12px] h-[30px] w-[30px]" viewBox="0 0 30 30"><path d="M1 6L15 1 29 6 27.500 22 15 29 2.500 22Z" fill="#e6e6e6" stroke="#bcbcbc"/><path d="M2 6.500L15 13 28 6.500M15 13V28" fill="none" stroke="#f6f6f6" stroke-width="1.500"/><ellipse cx="15" cy="7" rx="5" ry="2.500" fill="#d4d4d4" stroke="#fff"/><ellipse cx="8" cy="6" rx="3" ry="1.500" fill="#f8f8f8"/><ellipse cx="22" cy="6" rx="3" ry="1.500" fill="#f8f8f8"/></svg><span class="pt-px">libobic.A.dylib</span></div>
      <div class="flex h-[34px] shrink-0 items-center pl-[13px]"><svg class="mr-[12px] h-[32px] w-[30px]" viewBox="0 0 30 32"><path d="M1.500 4L23 1 27.500 28 6 31Z" fill="#d5e2e8" stroke="#fff" stroke-width="2"/><path d="M.8 3.500L23.500.5 28 28.500 5.500 31.500Z" fill="none" stroke="#c9c9c9" stroke-width=".8"/><path d="M12 22H28V26H11Z" fill="#b98652"/><path d="M20 15L13 30" stroke="#e8b02a" stroke-width="2.500"/><path d="M19 15L27 30" stroke="#4c423c" stroke-width="2.500"/><path d="M17 19L20 15 22 19" stroke="#c5301f" stroke-width="2.200" fill="none"/></svg><span class="pt-px tracking-[-.2px]">MacTest</span></div>
      <div class="flex h-[34px] shrink-0 items-center pl-[14px]"><svg class="mr-[13px] size-[28px]" viewBox="0 0 28 28"><rect width="27" height="27" x=".5" y="1" fill="#1f2422" stroke="#9a9a9a" stroke-width=".7"/><path d="M4 4.500H15" stroke="#3fae55" stroke-width="3" stroke-dasharray="2 1"/></svg><span class="pt-px">node</span></div>
    </div>
  </div>
</section>

<!-- Highlight boxes -->
<div class="absolute left-[1142px] top-[234px] h-[82px] w-[102px] rounded-[9px] border-[8px] border-[#ff0000] drop-shadow-[1px_2px_2px_rgba(0,0,0,.5)]"></div>
<div class="absolute left-[1628px] top-[392px] h-[90px] w-[420px] rounded-[9px] border-[8px] border-[#ff0000] drop-shadow-[1px_2px_2px_rgba(0,0,0,.5)]"></div>
</body>
</html>
